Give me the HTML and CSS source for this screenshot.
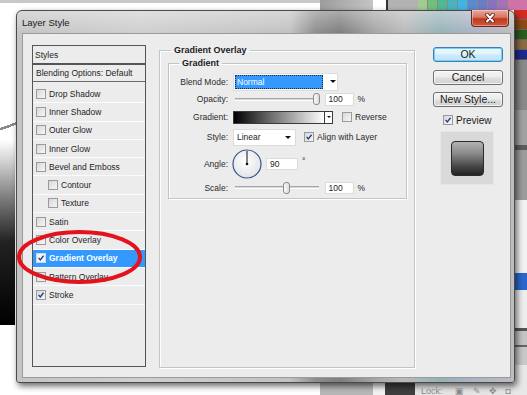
FILE: index.html
```html
<!DOCTYPE html>
<html lang="en">
<head>
<meta charset="utf-8">
<title>Layer Style</title>
<link rel="stylesheet" href="styles.css">
</head>
<body>
<div class="desk">
  <div class="win">
    <div class="titlebar">
      <span class="title">Layer Style</span>
      <div class="close"><svg width="14" height="10" viewBox="0 0 14 10"><path d="M4 1.5 L10 8.5 M10 1.5 L4 8.5" stroke="#5a1a10" stroke-width="3.6" stroke-linecap="round"/><path d="M4 1.5 L10 8.5 M10 1.5 L4 8.5" stroke="#fff" stroke-width="2" stroke-linecap="round"/></svg></div>
    </div>
    <div class="client">
      <div class="styles">
        <div class="sh">Styles</div>
        <div class="sb">Blending Options: Default</div>
        <div class="items">
          <div class="it"><span class="cb"></span>Drop Shadow</div>
          <div class="it"><span class="cb"></span>Inner Shadow</div>
          <div class="it"><span class="cb"></span>Outer Glow</div>
          <div class="it"><span class="cb"></span>Inner Glow</div>
          <div class="it"><span class="cb"></span>Bevel and Emboss</div>
          <div class="it ind"><span class="cb"></span>Contour</div>
          <div class="it ind"><span class="cb"></span>Texture</div>
          <div class="it"><span class="cb"></span>Satin</div>
          <div class="it"><span class="cb"></span>Color Overlay</div>
          <div class="it sel"><span class="cb on"><svg viewBox="0 0 10 10"><path d="M2 4.8 L4.1 7.4 L8.2 2.2" stroke="#1c3a8c" stroke-width="1.6" fill="none"/></svg></span>Gradient Overlay</div>
          <div class="it"><span class="cb"></span>Pattern Overlay</div>
          <div class="it"><span class="cb on"><svg viewBox="0 0 10 10"><path d="M2 4.8 L4.1 7.4 L8.2 2.2" stroke="#1c3a8c" stroke-width="1.6" fill="none"/></svg></span>Stroke</div>
        </div>
      </div>

      <fieldset class="grp">
        <legend>Gradient Overlay</legend>
        <fieldset class="sub">
          <legend>Gradient</legend>
          <div class="row r1">
            <span class="lbl">Blend Mode:</span>
            <div class="dd wide"><span class="val">Normal</span><span class="arr"></span></div>
          </div>
          <div class="row r2">
            <span class="lbl">Opacity:</span>
            <div class="sl"><div class="trk"></div><span class="thumb" style="left:78px"></span></div>
            <span class="num">100</span><span class="unit">%</span>
          </div>
          <div class="row r3">
            <span class="lbl">Gradient:</span>
            <div class="gbar"><span class="gfill"></span><span class="garr"><span class="arr"></span></span></div>
            <span class="cb rev"></span><span class="clbl">Reverse</span>
          </div>
          <div class="row r4">
            <span class="lbl">Style:</span>
            <div class="dd short"><span class="txt">Linear</span><span class="arr"></span></div>
            <span class="cb on align"><svg viewBox="0 0 10 10"><path d="M2 4.8 L4.1 7.4 L8.2 2.2" stroke="#1c3a8c" stroke-width="1.6" fill="none"/></svg></span><span class="clbl">Align with Layer</span>
          </div>
          <div class="row r5">
            <span class="lbl">Angle:</span>
            <svg class="dial" width="30" height="30" viewBox="0 0 30 30">
              <defs><radialGradient id="dg" cx="0.45" cy="0.4" r="0.7"><stop offset="0" stop-color="#ffffff"/><stop offset="1" stop-color="#dcdfe4"/></radialGradient></defs>
              <circle cx="15" cy="15" r="14" fill="url(#dg)" stroke="#3a5488" stroke-width="1.2"/>
              <line x1="15" y1="15" x2="15" y2="2" stroke="#111" stroke-width="1"/>
              <circle cx="15" cy="15" r="1.3" fill="#111"/>
            </svg>
            <span class="num ang">90</span><span class="deg">°</span>
          </div>
          <div class="row r6">
            <span class="lbl">Scale:</span>
            <div class="sl"><div class="trk"></div><span class="thumb" style="left:48px"></span></div>
            <span class="num">100</span><span class="unit">%</span>
          </div>
        </fieldset>
      </fieldset>

      <div class="btns">
        <div class="btn ok">OK</div>
        <div class="btn">Cancel</div>
        <div class="btn">New Style...</div>
        <div class="prow"><span class="cb on"><svg viewBox="0 0 10 10"><path d="M2 4.8 L4.1 7.4 L8.2 2.2" stroke="#1c3a8c" stroke-width="1.6" fill="none"/></svg></span><span>Preview</span></div>
        <div class="pbox"><div class="pswatch"></div></div>
      </div>
    </div>
  </div>

  <div class="lockbar">Lock: <span class="lk">▣ ✎ ✥ ◘</span></div>

  <svg class="ring" width="130" height="58" viewBox="0 0 130 58">
    <ellipse cx="64.5" cy="29" rx="60.5" ry="25" fill="none" stroke="#e3121c" stroke-width="4"/>
  </svg>
</div>
</body>
</html>
```

FILE: styles.css
```css
* { box-sizing: border-box; margin: 0; padding: 0; }
html, body { width: 527px; height: 395px; overflow: hidden; }
body {
  font-family: "Liberation Sans", Arial, sans-serif;
  font-size: 8.5px;
  color: #1e1e1e;
  background: #fff;
}

.desk {
  position: relative;
  width: 527px;
  height: 395px;
  overflow: hidden;
  background:
    linear-gradient(to right, #a0cc90 0 9px, #8a8a8a 9px 10px, #70c07c 10px 19px, #8a8a8a 19px 20px, #52b894 20px 29px, #8a8a8a 29px 30px, #48b4bc 30px 39px, #8a8a8a 39px 40px, #40b4e4 40px 49px, #8a8a8a 49px 50px, #5a8ad0 50px 59px, #8a8a8a 59px 60px, #6c7cc4 60px 69px, #8a8a8a 69px 70px, #8a72c0 70px 79px, #8a8a8a 79px 80px, #a472b8 80px 89px, #8a8a8a 89px 90px, #d074a8 90px 109px) 418px 0 / 109px 10px no-repeat,
    linear-gradient(#d42a20 0 9px, #666 9px 10px, #8e4a14 10px 19px, #666 19px 20px, #2d5c1e 20px 29px, #666 29px 30px, #8c6c44 30px 39px, #666 39px 40px, #1c2a8e 40px 49px, #555 49px 50px, #8a8a8a 50px 100px, #a2a2a2 100px 135px, #5c5c5c 135px 140px, #9c9c9c 140px 190px, #f2f2f2 190px 263px, #2a68cc 263px 280px, #eeeeee 280px 318px, #555 318px 321px, #c4c4c4 321px 335px, #666 335px 337px, #c8c8c8 337px 355px, #e8e8e8 355px 385px) 514px 10px / 13px 385px no-repeat,
    linear-gradient(#c8c8c8, #c8c8c8) 0 0 / 320px 3px no-repeat,
    linear-gradient(to right, #9c9c9c, #c4c4c4) 320px 0 / 53px 10px no-repeat,
    linear-gradient(#333, #333) 386px 0 / 2px 10px no-repeat,
    linear-gradient(#b2b2b2, #b2b2b2) 388px 0 / 30px 10px no-repeat,
    linear-gradient(to right, #ffffff 0 320px, #b8b8b8 320px 373px, #f2f2f2 373px 385px, #3e3e3e 385px 415px, #e4e4e4 415px) 0 383px / 527px 12px no-repeat,
    linear-gradient(160deg, transparent 0 46%, #8a8a8a 46% 58%, transparent 58%) 0 118px / 16px 16px no-repeat,
    linear-gradient(to bottom, #ffffff 0%, #d0d0d0 12%, #7a7a7a 32%, #222 55%, #000 100%) 0 140px / 15px 185px no-repeat,
    #ffffff;
}

/* ---------- window ---------- */
.win {
  position: absolute;
  left: 16px;
  top: 10px;
  width: 499px;
  height: 373px;
  border: 1px solid #4a4a4a;
  border-radius: 6px 6px 3px 3px;
  background:
    linear-gradient(rgba(255,255,255,.35), rgba(255,255,255,0) 22px),
    linear-gradient(to right, #c4c4c4 0%, #cfcfcf 25%, #c2c2c2 55%, #8e8e8e 60%, #7e7e7e 65%, #a6a6a6 72%, #bababa 78%, #96b2b6 85%, #aab2c6 92%, #bdbdbd 100%);
  box-shadow: 2px 3px 6px rgba(0,0,0,.6);
  padding: 0 3px 4px 5px;
  display: flex;
  flex-direction: column;
}

.titlebar {
  height: 22px;
  display: flex;
  align-items: center;
  flex: none;
}
.title {
  font-size: 9.5px;
  color: #1a1a1a;
  flex: 1;
}
.close {
  align-self: flex-start;
  margin-top: -1px;
  margin-right: 2px;
  width: 38px;
  height: 17px;
  border: 1px solid #6b2a20;
  border-top: none;
  border-radius: 0 0 4px 4px;
  background: linear-gradient(#e9a898 0%, #d87862 45%, #c2391f 55%, #cf5a3a 100%);
  box-shadow: inset 0 0 0 1px rgba(255,255,255,.35);
  display: flex;
  align-items: center;
  justify-content: center;
}

.client {
  flex: 1;
  background: #ececec;
  border: 1px solid #9a9a9a;
  display: flex;
  align-items: flex-start;
}

/* ---------- styles list ---------- */
.styles {
  margin: 11px 0 0 9px;
  width: 114px;
  height: 322px;
  border: 1px solid #555;
  background: #ececec;
  flex: none;
}
.sh {
  height: 19px;
  line-height: 19px;
  padding-left: 2px;
  border-bottom: 2px solid #555;
}
.sb {
  height: 17px;
  line-height: 17px;
  padding-left: 3px;
  border-bottom: 1px solid #6a6a6a;
}
.items { padding-top: 3px; }
.it {
  height: 18.3px;
  border-bottom: 1px solid #fbfbfb;
  display: flex;
  align-items: center;
  gap: 3px;
  padding-left: 3px;
}
.it.ind { padding-left: 15px; }
.it.sel {
  background: #3399ff;
  color: #fff;
  font-weight: bold;
}

.cb {
  width: 10px;
  height: 10px;
  flex: none;
  border: 1px solid #9a9a9a;
  background: linear-gradient(135deg, #d8d8d8, #f6f6f6);
  display: inline-flex;
}
.cb svg { width: 8px; height: 8px; }
.sel .cb { background: #f4f4f4; border-color: #c8d8f0; }

/* ---------- group boxes ---------- */
fieldset {
  border: 1px solid #c4c4c4;
  box-shadow: inset 1px 1px 0 #fff, 1px 1px 0 #fff;
  min-width: 0;
}
legend {
  font-weight: bold;
  font-size: 9px;
  line-height: 11px;
  padding: 0 3px;
  color: #1a1a1a;
}
.grp {
  margin: 11px 0 0 13px;
  width: 256px;
  height: 323px;
  padding: 0 7px 0 8px;
  flex: none;
}
.grp > legend { margin-left: 3px; }
.sub {
  margin-top: 2px;
  padding: 0 0 4px 0;
}
.sub > legend { margin-left: 10px; }

.row { display: flex; align-items: center; }
.r1 { height: 18px; margin-top: 3.5px; }
.r2 { height: 13px; margin-top: 2px; }
.r3 { height: 13px; margin-top: 5px; }
.r4 { height: 17px; margin-top: 5px; }
.r5 { height: 29px; margin-top: 4px; }
.r6 { height: 12px; margin-top: 3px; }

.lbl {
  width: 59px;
  margin-right: 5px;
  text-align: right;
  flex: none;
  color: #2a2a2a;
}

.dd {
  height: 100%;
  background: #fff;
  border: 1px solid #dcdcdc;
  display: flex;
  align-items: center;
  flex: none;
}
.dd.wide { width: 105px; padding: 1px; }
.dd.short { width: 63px; padding-left: 3px; }
.dd .val {
  width: 88px;
  height: 100%;
  background: #3399ff;
  color: #fff;
  border: 1px dotted #2a2a2a;
  padding-left: 1px;
  display: flex;
  align-items: center;
}
.dd .txt { flex: 1; }
.arr {
  width: 0;
  height: 0;
  border-left: 3px solid transparent;
  border-right: 3px solid transparent;
  border-top: 3px solid #111;
}
.dd.wide .arr { margin-left: 7px; }
.dd.short .arr { margin-right: 4px; }

.sl {
  position: relative;
  width: 84px;
  height: 100%;
  margin-left: 2px;
  display: flex;
  align-items: center;
  flex: none;
}
.trk {
  width: 100%;
  height: 3px;
  border-top: 1px solid #a6a6a6;
  border-bottom: 1px solid #fff;
  background: #d6d6d6;
}
.thumb {
  position: absolute;
  top: 50%;
  margin-top: -6px;
  width: 7px;
  height: 12px;
  border: 1px solid #8a8a8a;
  border-radius: 3px;
  background: linear-gradient(to right, #fafafa, #dcdcdc);
}

.num {
  width: 29px;
  height: 13px;
  margin-left: 5.5px;
  background: #fff;
  border: 1px solid #dcdcdc;
  padding-left: 3px;
  display: flex;
  align-items: center;
  flex: none;
}
.r6 .num { height: 12px; }
.unit { margin-left: 4px; }

.gbar {
  width: 100px;
  height: 13px;
  display: flex;
  flex: none;
  border: 1px solid #3a3a3a;
}
.gfill {
  flex: 1;
  background: linear-gradient(to right, #000 0%, #6a6a6a 40%, #fff 100%);
  border-right: 1px solid #3a3a3a;
}
.garr {
  width: 7px;
  background: #fff;
  display: flex;
  align-items: center;
  justify-content: center;
}
.garr .arr { border-left-width: 2px; border-right-width: 2px; border-top-width: 2px; }

.cb.rev { margin-left: 9px; }
.cb.align { margin-left: 8px; }
.clbl { margin-left: 3px; color: #2a2a2a; }

.dial { margin-left: -1px; flex: none; }
.num.ang { width: 32px; height: 12px; margin-left: 4px; }
.deg { margin-left: 4px; align-self: flex-start; margin-top: 6px; }

/* ---------- buttons ---------- */
.btns {
  margin: 13px 0 0 18px;
  width: 70px;
  display: flex;
  flex-direction: column;
  flex: none;
}
.btn {
  height: 15px;
  border: 1px solid #707070;
  border-radius: 3px;
  background: linear-gradient(#f4f4f4 0%, #ececec 48%, #dedede 52%, #d2d2d2 100%);
  font-size: 10.5px;
  line-height: 13px;
  text-align: center;
  color: #1a1a1a;
  margin-bottom: 7.5px;
  box-shadow: inset 0 0 0 1px rgba(255,255,255,.7);
}
.btn.ok {
  border-color: #3c7fb1;
  background: linear-gradient(#eef8fd 0%, #e0f2fc 48%, #cdebfc 52%, #bde2f6 100%);
  box-shadow: inset 0 0 0 1px #6ed3f7;
}
.prow {
  display: flex;
  align-items: center;
  gap: 3px;
  margin-left: 10px;
  height: 11px;
  font-size: 10px;
  color: #1a1a1a;
}
.pbox {
  margin: 5px 0 0 7px;
  width: 54px;
  height: 54px;
  background: #d9d9d9;
  border: 1px solid #e6e6e6;
  display: flex;
  align-items: center;
  justify-content: center;
  padding-top: 2px;
}
.pswatch {
  width: 33px;
  height: 35px;
  border-radius: 4px;
  border: 1px solid #2a2a2a;
  background: linear-gradient(#b2b2b2 0%, #8a8a8a 35%, #444 75%, #222 100%);
}

/* ---------- background panel bits ---------- */
.lockbar {
  position: absolute;
  left: 421px;
  top: 386px;
  font-size: 9px;
  color: #888;
  white-space: nowrap;
}
.lk { margin-left: 10px; letter-spacing: 3px; }

/* ---------- annotation ---------- */
.ring {
  position: absolute;
  left: 15px;
  top: 228px;
}
```
